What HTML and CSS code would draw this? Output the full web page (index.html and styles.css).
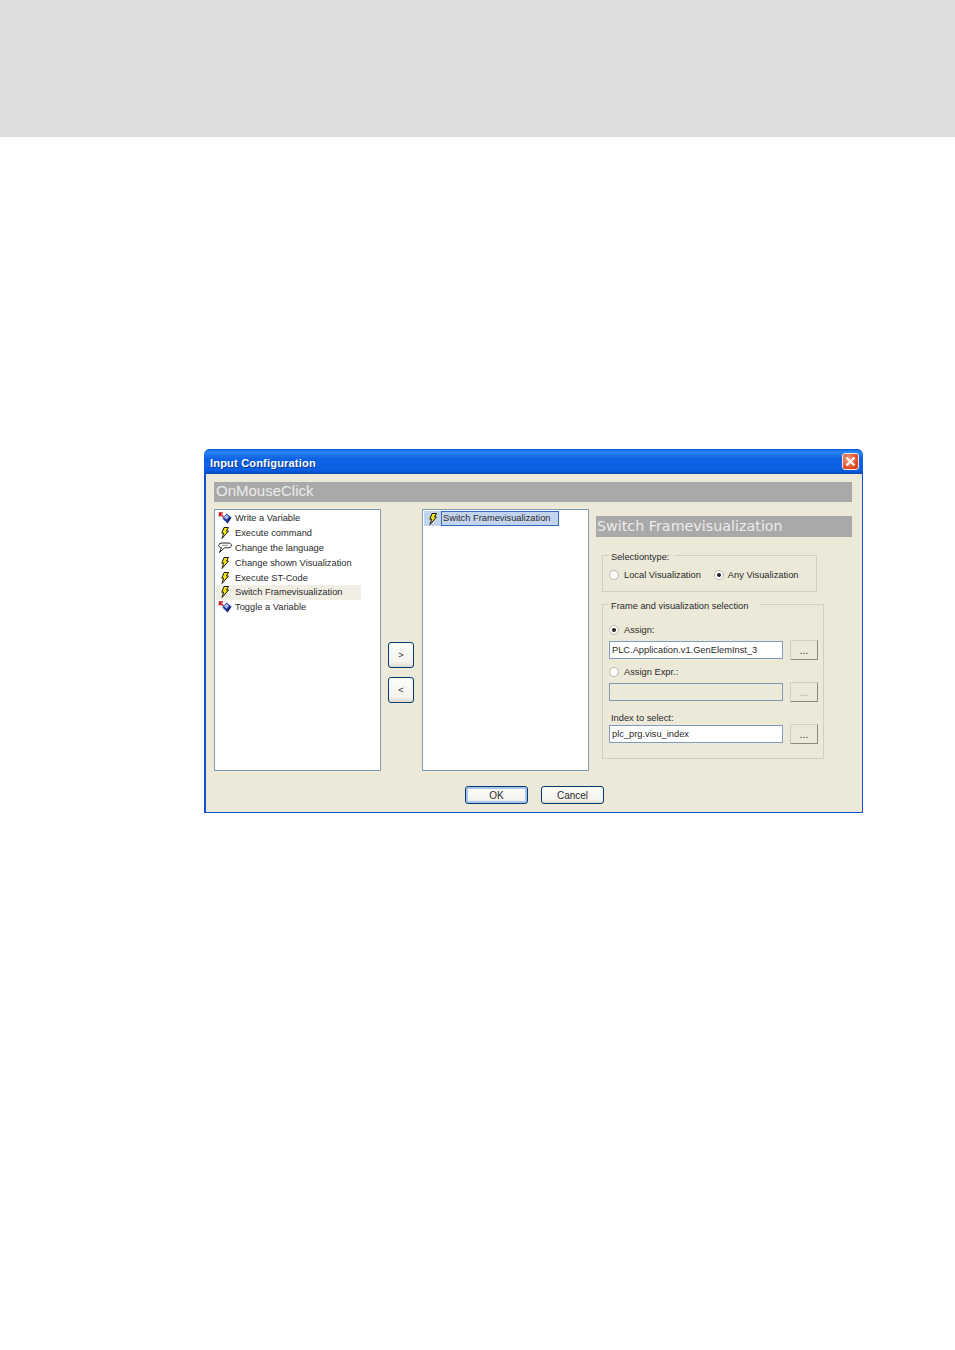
FILE: index.html
```html
<!DOCTYPE html>
<html lang="en">
<head>
    <meta charset="UTF-8">
    <meta name="viewport" content="width=device-width, initial-scale=1.0">
    <title>Input Configuration</title>
    <link rel="stylesheet" href="styles.css">
</head>
<body>
    <svg class="defs" width="0" height="0">
        <symbol id="bolt" viewBox="0 0 12 12">
            <path d="M5 .5H9.5L7.5 4H9.5L3 11.5 4.6 6.2H2.8Z" fill="#f7e318" stroke="#1a1a10" stroke-width="1"/>
        </symbol>
        <symbol id="cube" viewBox="0 0 14 12">
            <path d="M1 1 5.5 5M1.5 4.5V1H5" fill="none" stroke="#c8202a" stroke-width="1.6"/>
            <path d="M8.5 1.5 13.5 5.5 9.5 11.5 4.5 6.5Z" fill="#23389c"/>
            <path d="M8.5 2.5 11 5 8.5 7.5 6 5.5Z" fill="#a9bcf0"/>
            <path d="M9.5 11.5 10 7 13.5 5.5Z" fill="#16226a"/>
        </symbol>
        <symbol id="bubble" viewBox="0 0 14 12">
            <path d="M4.5 1H10C12.2 1 13.5 2 13.5 3.3 13.5 4.8 11.8 5.8 9.5 5.8H6.5L1.5 10.5 3.5 5.6C1.8 5.3.7 4.5.7 3.3.7 2 2.4 1 4.5 1Z" fill="#fff" stroke="#222" stroke-width="1"/>
            <path d="M4 3.3H10" stroke="#999" stroke-width="1"/>
        </symbol>
    </svg>

    <div class="band"></div>

    <div class="dialog">
        <div class="titlebar">
            <span class="title">Input Configuration</span>
            <span class="close">
                <svg width="11" height="11" viewBox="0 0 11 11"><path d="M1.5 1.5 9.5 9.5M9.5 1.5 1.5 9.5" stroke="#fff" stroke-width="2.2"/></svg>
            </span>
        </div>
        <div class="body">
            <div class="heading heading-top">OnMouseClick</div>
            <div class="columns">
                <ul class="list">
                    <li><svg class="ico" width="14" height="12"><use href="#cube"/></svg>Write a Variable</li>
                    <li><svg class="ico" width="14" height="12"><use href="#bolt"/></svg>Execute command</li>
                    <li><svg class="ico" width="14" height="12"><use href="#bubble"/></svg>Change the language</li>
                    <li><svg class="ico" width="14" height="12"><use href="#bolt"/></svg>Change shown Visualization</li>
                    <li><svg class="ico" width="14" height="12"><use href="#bolt"/></svg>Execute ST-Code</li>
                    <li class="hover"><svg class="ico" width="14" height="12"><use href="#bolt"/></svg>Switch Framevisualization</li>
                    <li><svg class="ico" width="14" height="12"><use href="#cube"/></svg>Toggle a Variable</li>
                </ul>
                <div class="movers">
                    <button class="btn mover">&gt;</button>
                    <button class="btn mover">&lt;</button>
                </div>
                <ul class="list">
                    <li class="picked"><span class="picked-ico"><svg width="14" height="12"><use href="#bolt"/></svg></span><span class="picked-text">Switch Framevisualization</span></li>
                </ul>
                <div class="props">
                    <div class="heading heading-side">Switch Framevisualization</div>
                    <fieldset class="group group-type">
                        <legend>Selectiontype:</legend>
                        <div class="radios">
                            <span class="radio"></span><span class="radio-label">Local Visualization</span>
                            <span class="radio on"></span><span class="radio-label">Any Visualization</span>
                        </div>
                    </fieldset>
                    <fieldset class="group group-frame">
                        <legend>Frame and visualization selection</legend>
                        <div class="radios first"><span class="radio on"></span><span class="radio-label">Assign:</span></div>
                        <div class="field">
                            <input class="text" type="text" value="PLC.Application.v1.GenElemInst_3">
                            <button class="btn dots">...</button>
                        </div>
                        <div class="radios"><span class="radio"></span><span class="radio-label">Assign Expr.:</span></div>
                        <div class="field">
                            <input class="text" type="text" disabled>
                            <button class="btn dots off">...</button>
                        </div>
                        <div class="index-label">Index to select:</div>
                        <div class="field">
                            <input class="text" type="text" value="plc_prg.visu_index">
                            <button class="btn dots">...</button>
                        </div>
                    </fieldset>
                </div>
            </div>
            <div class="actions">
                <button class="btn action default">OK</button>
                <button class="btn action">Cancel</button>
            </div>
        </div>
    </div>
</body>
</html>
```
FILE: styles.css
```css
html, body { margin: 0; padding: 0; background: white; }
body {
    font-family: "Liberation Sans", Arial, sans-serif;
    font-size: 9.3px;
    color: #2a2a2a;
    min-height: 1350px;
}
.defs { position: absolute; }
.band { height: 137px; background: #dedede; }

.dialog {
    width: 659px;
    height: 364px;
    margin: 312px 0 0 204px;
    display: flex;
    flex-direction: column;
    background: #0a50d8;
    border-radius: 6px 6px 0 0;
}
.titlebar {
    height: 25px;
    flex: none;
    box-sizing: border-box;
    padding: 2px 4px 0 6px;
    display: flex;
    align-items: center;
    justify-content: space-between;
    background: linear-gradient(#0a5cdc 0%, #2a86f2 12%, #0c62e4 40%, #0a5ee2 85%, #0648b8 100%);
    border-radius: 6px 6px 0 0;
}
.title {
    color: white;
    font-weight: bold;
    font-size: 11px;
    letter-spacing: 0.2px;
    text-shadow: 1px 1px 0 #0a3a9a;
}
.close {
    width: 17px;
    height: 17px;
    box-sizing: border-box;
    margin-top: -2px;
    display: flex;
    align-items: center;
    justify-content: center;
    background: radial-gradient(circle at 35% 35%, #f0a080, #d8401c 75%);
    border: 1px solid #f4e8e0;
    border-radius: 3px;
}
.body {
    flex: 1;
    margin: 0 1px 1px 2px;
    padding: 8px 10px 0 8px;
    background: #ece9d8;
    display: flex;
    flex-direction: column;
}
.heading { background: #a9a9a9; color: #ececec; }
.heading-top { height: 20px; line-height: 18px; font-size: 15px; padding-left: 2px; }
.heading-side {
    height: 21px;
    line-height: 20px;
    font-family: "DejaVu Sans", Verdana, sans-serif;
    font-size: 14.3px;
    padding-left: 1px;
    margin-bottom: 12px;
}

.columns {
    display: grid;
    grid-template-columns: 167px 41px 167px 263px;
    margin-top: 7px;
    height: 262px;
}
.list {
    list-style: none;
    margin: 0;
    padding: 1px 0 0 1px;
    background: white;
    border: 1px solid #7f9db9;
    box-sizing: border-box;
    height: 262px;
}
.list li {
    height: 14.8px;
    line-height: 14px;
    width: 145px;
    display: flex;
    align-items: center;
    white-space: nowrap;
}
.ico { flex: none; margin-right: 3px; margin-left: 2px; }
.list li.hover { background: #f1efe4; }
.list li.picked { width: auto; height: 15px; }
.picked-ico {
    background: #c3d5ee;
    height: 15px;
    width: 17px;
    display: flex;
    align-items: center;
    justify-content: center;
}
.picked-text {
    background: #c3d5ee;
    border: 1px solid #316ac5;
    box-sizing: border-box;
    height: 15px;
    line-height: 13px;
    width: 118px;
    padding-left: 1px;
}
.movers {
    display: flex;
    flex-direction: column;
    gap: 9px;
    padding: 133px 0 0 7px;
}
.btn {
    font-family: inherit;
    font-size: 10px;
    color: #2a2a2a;
    padding: 0;
    background: linear-gradient(#fdfdfb, #f4f3ec 80%, #dcd8ca);
    border: 1px solid #003c74;
    border-radius: 3px;
}
.mover { width: 26px; height: 26px; font-size: 9px; }

.props { margin-left: 7px; padding-top: 7px; width: 256px; }
.group {
    margin: 0 0 0 6px;
    padding: 0;
    border: 1px solid #d0d0bf;
    min-width: 0;
}
/* legend sits a little under the frame line, as in the old dialog */
.group legend {
    position: relative;
    top: 2px;
    padding: 0 6px 0 2px;
    height: 12px;
    line-height: 12px;
}
.group-type legend { margin-left: 6px; }
.group-frame legend { margin-left: 0; padding-right: 12px; }
.group-type { width: 215px; height: 43px; box-sizing: border-box; margin-bottom: 6px; }
.group-frame { width: 222px; height: 161px; box-sizing: border-box; padding-left: 6px; }
.group-type .radios { padding: 7px 0 0 6px; }
.radios { display: flex; align-items: center; height: 14px; white-space: nowrap; }
.group-frame .radios { margin-top: 5px; }
.group-frame .radios.first { margin-top: 13px; }
.radio {
    width: 10px;
    height: 10px;
    flex: none;
    border-radius: 50%;
    background: white;
    border: 1px solid #b8b8a8;
    box-sizing: border-box;
    margin-right: 5px;
    display: flex;
    align-items: center;
    justify-content: center;
}
.group-type .radio.on { margin-right: 4px; }
.radio.on::after {
    content: "";
    width: 4px;
    height: 4px;
    border-radius: 50%;
    background: #222;
}
.radio-label { margin-right: 13px; }
.field { display: flex; align-items: center; gap: 7px; height: 20px; margin-top: 3px; }
.text {
    width: 174px;
    height: 18px;
    box-sizing: border-box;
    padding: 0 2px;
    border: 1px solid #7f9db9;
    font-family: inherit;
    font-size: 9.3px;
    color: #2a2a2a;
    background: white;
}
.text:disabled { background: #ece9d8; }
.dots {
    width: 28px;
    height: 20px;
    border: 1px solid #d0cfc4;
    border-right-color: #8a8878;
    border-bottom-color: #8a8878;
    border-radius: 1px;
    background: #ece9d8;
}
.dots.off { color: #a5a294; }
.index-label { margin-top: 10px; padding-left: 2px; height: 12px; line-height: 12px; }
.index-label + .field { margin-top: 0; }

.actions {
    display: flex;
    gap: 13px;
    margin-top: 15px;
    padding-left: 251px;
}
.action { width: 63px; height: 18px; }
.default { box-shadow: inset 0 0 0 2px #a8c4ee; }
```
